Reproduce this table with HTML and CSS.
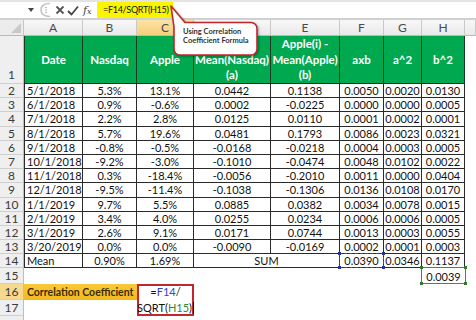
FILE: index.html
```html
<!DOCTYPE html>
<html>
<head>
<meta charset="utf-8">
<link rel="stylesheet" href="styles.css">
</head>
<body>
<div class="app">
  <div class="fbar">
    <div class="namebox">
      <svg class="dd" width="8" height="6" viewBox="0 0 8 6"><path d="M1 1 L7 1 L4 5 Z" fill="#444"/></svg>
    </div>
    <svg class="split" width="14" height="16" viewBox="0 0 14 16"><path d="M12 1.5 Q3 1.5 3 8 Q3 14.5 12 14.5" fill="none" stroke="#c4c4c4" stroke-width="1.6"/><circle cx="8" cy="5.5" r="0.8" fill="#aaa"/><circle cx="8" cy="8" r="0.8" fill="#aaa"/><circle cx="8" cy="10.5" r="0.8" fill="#aaa"/></svg>
    <svg class="icx" width="10" height="10" viewBox="0 0 10 10"><path d="M1.5 1.5 L8.5 8.5 M8.5 1.5 L1.5 8.5" stroke="#555" stroke-width="1.8" fill="none"/></svg>
    <svg class="icv" width="12" height="11" viewBox="0 0 12 11"><path d="M1 6 L4.5 9.5 L11 1.5" stroke="#444" stroke-width="1.8" fill="none"/></svg>
    <span class="fx"><i>f</i><span class="fxs">x</span></span>
    <div class="finput"><span class="fhl">=F14/SQRT(H15)</span></div>
  </div>

  <div class="sheet">
    <div class="corner"><svg width="10" height="10" viewBox="0 0 10 10"><path d="M10 0 L10 10 L0 10 Z" fill="#c9c9c9"/></svg></div>
    <div class="ch">A</div><div class="ch">B</div><div class="ch act">C</div><div class="ch"></div><div class="ch">E</div><div class="ch">F</div><div class="ch">G</div><div class="ch">H</div><div class="ch"></div>

    <div class="rh r1">1</div>
    <div class="g gl">Date</div><div class="g">Nasdaq</div><div class="g">Apple</div>
    <div class="g gd"><span>Mean(Nasdaq)<br>(a)</span></div>
    <div class="g"><span>Apple(i) -<br>Mean(Apple)<br>(b)</span></div>
    <div class="g">axb</div><div class="g">a^2</div><div class="g">b^2</div><div class="e"></div>

    <div class="rh">2</div><div class="c b bl l">5/1/2018</div><div class="c b">5.3%</div><div class="c b">13.1%</div><div class="c b">0.0442</div><div class="c b">0.1138</div><div class="c b">0.0050</div><div class="c b">0.0020</div><div class="c b">0.0130</div><div class="e"></div>
    <div class="rh">3</div><div class="c b bl l">6/1/2018</div><div class="c b">0.9%</div><div class="c b">-0.6%</div><div class="c b">0.0002</div><div class="c b">-0.0225</div><div class="c b">0.0000</div><div class="c b">0.0000</div><div class="c b">0.0005</div><div class="e"></div>
    <div class="rh">4</div><div class="c b bl l">7/1/2018</div><div class="c b">2.2%</div><div class="c b">2.8%</div><div class="c b">0.0125</div><div class="c b">0.0110</div><div class="c b">0.0001</div><div class="c b">0.0002</div><div class="c b">0.0001</div><div class="e"></div>
    <div class="rh">5</div><div class="c b bl l">8/1/2018</div><div class="c b">5.7%</div><div class="c b">19.6%</div><div class="c b">0.0481</div><div class="c b">0.1793</div><div class="c b">0.0086</div><div class="c b">0.0023</div><div class="c b">0.0321</div><div class="e"></div>
    <div class="rh">6</div><div class="c b bl l">9/1/2018</div><div class="c b">-0.8%</div><div class="c b">-0.5%</div><div class="c b">-0.0168</div><div class="c b">-0.0218</div><div class="c b">0.0004</div><div class="c b">0.0003</div><div class="c b">0.0005</div><div class="e"></div>
    <div class="rh">7</div><div class="c b bl l">10/1/2018</div><div class="c b">-9.2%</div><div class="c b">-3.0%</div><div class="c b">-0.1010</div><div class="c b">-0.0474</div><div class="c b">0.0048</div><div class="c b">0.0102</div><div class="c b">0.0022</div><div class="e"></div>
    <div class="rh">8</div><div class="c b bl l">11/1/2018</div><div class="c b">0.3%</div><div class="c b">-18.4%</div><div class="c b">-0.0056</div><div class="c b">-0.2010</div><div class="c b">0.0011</div><div class="c b">0.0000</div><div class="c b">0.0404</div><div class="e"></div>
    <div class="rh">9</div><div class="c b bl l">12/1/2018</div><div class="c b">-9.5%</div><div class="c b">-11.4%</div><div class="c b">-0.1038</div><div class="c b">-0.1306</div><div class="c b">0.0136</div><div class="c b">0.0108</div><div class="c b">0.0170</div><div class="e"></div>
    <div class="rh">10</div><div class="c b bl l">1/1/2019</div><div class="c b">9.7%</div><div class="c b">5.5%</div><div class="c b">0.0885</div><div class="c b">0.0382</div><div class="c b">0.0034</div><div class="c b">0.0078</div><div class="c b">0.0015</div><div class="e"></div>
    <div class="rh">11</div><div class="c b bl l">2/1/2019</div><div class="c b">3.4%</div><div class="c b">4.0%</div><div class="c b">0.0255</div><div class="c b">0.0234</div><div class="c b">0.0006</div><div class="c b">0.0006</div><div class="c b">0.0005</div><div class="e"></div>
    <div class="rh">12</div><div class="c b bl l">3/1/2019</div><div class="c b">2.6%</div><div class="c b">9.1%</div><div class="c b">0.0171</div><div class="c b">0.0744</div><div class="c b">0.0013</div><div class="c b">0.0003</div><div class="c b">0.0055</div><div class="e"></div>
    <div class="rh">13</div><div class="c b bl l">3/20/2019</div><div class="c b">0.0%</div><div class="c b">0.0%</div><div class="c b">-0.0090</div><div class="c b">-0.0169</div><div class="c b">0.0002</div><div class="c b">0.0001</div><div class="c b">0.0003</div><div class="e"></div>
    <div class="rh">14</div><div class="c b bl l">Mean</div><div class="c b">0.90%</div><div class="c b">1.69%</div><div class="c b span2">SUM</div>
    <div class="c b selcell">0.0390<span class="selb"><i class="k tl"></i><i class="k tr"></i><i class="k bl2"></i><i class="k br"></i></span></div>
    <div class="c b">0.0346</div><div class="c b">0.1137</div><div class="e"></div>

    <div class="rh">15</div><div class="e"></div><div class="e"></div><div class="e"></div><div class="e"></div><div class="e"></div><div class="e"></div><div class="e"></div>
    <div class="c selcell">0.0039<span class="selg"><i class="k tl"></i><i class="k tr"></i><i class="k bl2"></i><i class="k br"></i></span></div><div class="e"></div>

    <div class="rh act">16</div><div class="cc span2">Correlation Coefficient</div>
    <div class="fcell"><div>=<span class="r1c">F14</span>/</div><div>SQRT(<span class="r2c">H15</span>)<span class="caret"></span></div></div>
    <div class="e"></div><div class="e"></div><div class="e"></div><div class="e"></div><div class="e"></div><div class="e"></div>

    <div class="rh">17</div><div class="e"></div><div class="e"></div><div class="e"></div><div class="e"></div><div class="e"></div><div class="e"></div><div class="e"></div><div class="e"></div>

    <div class="rh"></div><div class="e"></div><div class="e"></div><div class="e"></div><div class="e"></div><div class="e"></div><div class="e"></div><div class="e"></div><div class="e"></div><div class="e"></div>
  </div>

  <div class="callout">
    <svg class="callout-shape" width="100" height="58" viewBox="0 0 100 58"><path d="M6 4 L20 20.5 L86 20.5 A6 6 0 0 1 92 26.5 L92 47 A6 6 0 0 1 86 53 L15 53 A6 6 0 0 1 9 47 L9 25 Z" fill="#fff" stroke="#c1272d" stroke-width="1.6" stroke-linejoin="round"/></svg>
    <div class="callout-text">Using Correlation<br>Coefficient Formula</div>
  </div>
</div>
</body>
</html>
```

FILE: styles.css
```css
* { box-sizing: border-box; }
html, body { margin: 0; padding: 0; }
body { width: 476px; height: 320px; overflow: hidden; background: #fff; font-family: Lato, "Open Sans", sans-serif; }
.app { position: relative; width: 476px; height: 320px; overflow: hidden; }

.fbar { height: 20px; display: flex; align-items: center; background: #fff; border-top: 2px solid #e4e4e4; border-bottom: 2px solid #d0d0d0; }
.fbar > * { flex-shrink: 0; }
.namebox { width: 38px; height: 16px; display: flex; align-items: center; justify-content: flex-end; padding-right: 3px; }
.icx { margin-left: 3px; }
.icv { margin-left: 2px; }
.fx { margin-left: 4px; font-family: "DejaVu Serif", "Liberation Serif", serif; color: #444; font-size: 11px; width: 12px; }
.fx i { font-style: italic; }
.fxs { font-size: 8px; font-style: italic; }
.finput { flex: 1; height: 16px; display: flex; align-items: center; padding-left: 2px; }
.fhl { background: #fbf500; height: 16px; width: 76px; padding-left: 6px; font-size: 9px; letter-spacing: -0.3px; line-height: 16px; color: #111; white-space: nowrap; }

.sheet { display: grid; grid-template-columns: 24px 59px 54px 57px 77px 69px 44px 38px 43px 11px; grid-template-rows: 16px 48px repeat(13, 14.2px) 15.5px 16.5px 15.5px 20px; font-size: 11px; color: #111; }
.corner { background: #ececec; border-right: 1px solid #c6c6c6; border-bottom: 1px solid #b8b8b8; display: flex; align-items: flex-end; justify-content: flex-end; padding: 0 2px 2px 0; }
.ch { background: linear-gradient(#f8f8f8, #e9e9e9); border-right: 1px solid #c9c9c9; border-bottom: 1px solid #b8b8b8; display: flex; align-items: center; justify-content: center; font-size: 12px; color: #4a4a4a; }
.ch.act { background: linear-gradient(#fbe3a4, #f4cf7d); }
.rh { background: #efefef; border-right: 1px solid #bdbdbd; border-bottom: 1px solid #cfcfcf; display: flex; align-items: center; justify-content: center; font-size: 12px; color: #3a3a3a; }
.rh.r1 { align-items: flex-end; padding-bottom: 1px; }
.rh.act { background: #f6d98e; }

.g { background: #00a94f; color: #fff; font-weight: 700; font-size: 11.5px; line-height: 15.5px; display: flex; align-items: center; justify-content: center; text-align: center; border-right: 1px solid #1c3a24; border-bottom: 1px solid #1c2a20; white-space: nowrap; }
.g.gl { border-left: 1px solid #1c3a24; }
.g.gd { padding-top: 15.5px; }
.e { background: #fff; }

.c { display: flex; align-items: center; justify-content: center; white-space: nowrap; line-height: 13px; }
.c.l { justify-content: flex-start; padding-left: 2px; }
.b { border-right: 1px solid #2a2a2a; border-bottom: 1px solid #2a2a2a; }
.bl { border-left: 1px solid #2a2a2a; }
.span2 { grid-column: span 2; }

.selcell { position: relative; }
.selb, .selg { position: absolute; inset: -1px -1px -1px -1px; }
.selb { border: 1px dashed #3b46b8; }
.selg { border: 1px solid #3f8f3f; inset: -1px -1px 0 -1px; }
.k { position: absolute; width: 3px; height: 3px; }
.selb .k { background: #26309a; }
.selg .k { background: #2f7a2f; }
.k.tl { left: -2px; top: -2px; }
.k.tr { right: -2px; top: -2px; }
.k.bl2 { left: -2px; bottom: -2px; }
.k.br { right: -2px; bottom: -2px; }

.cc { background: linear-gradient(#f9c93a, #f2b91f); color: #3b2c00; font-weight: 700; font-size: 10.5px; display: flex; align-items: center; padding-left: 3px; white-space: nowrap; }
.fcell { grid-row: span 2; border: 2px solid #c4262e; background: #fff; display: flex; flex-direction: column; align-items: center; justify-content: center; font-size: 11px; line-height: 15.5px; color: #111; white-space: nowrap; }
.r1c { color: #3a3fc4; }
.r2c { color: #2f8a2f; }
.caret { display: inline-block; width: 1px; height: 12px; background: #000; margin-left: 1px; vertical-align: -2px; }

.callout { position: absolute; left: 165px; top: 2px; width: 100px; height: 58px; }
.callout-shape { position: absolute; left: 0; top: 0; filter: drop-shadow(1px 1px 1px rgba(0,0,0,0.35)); }
.callout-text { position: absolute; left: 18px; top: 25px; font-size: 7.5px; line-height: 9px; font-weight: 700; color: #333; white-space: nowrap; }
```
